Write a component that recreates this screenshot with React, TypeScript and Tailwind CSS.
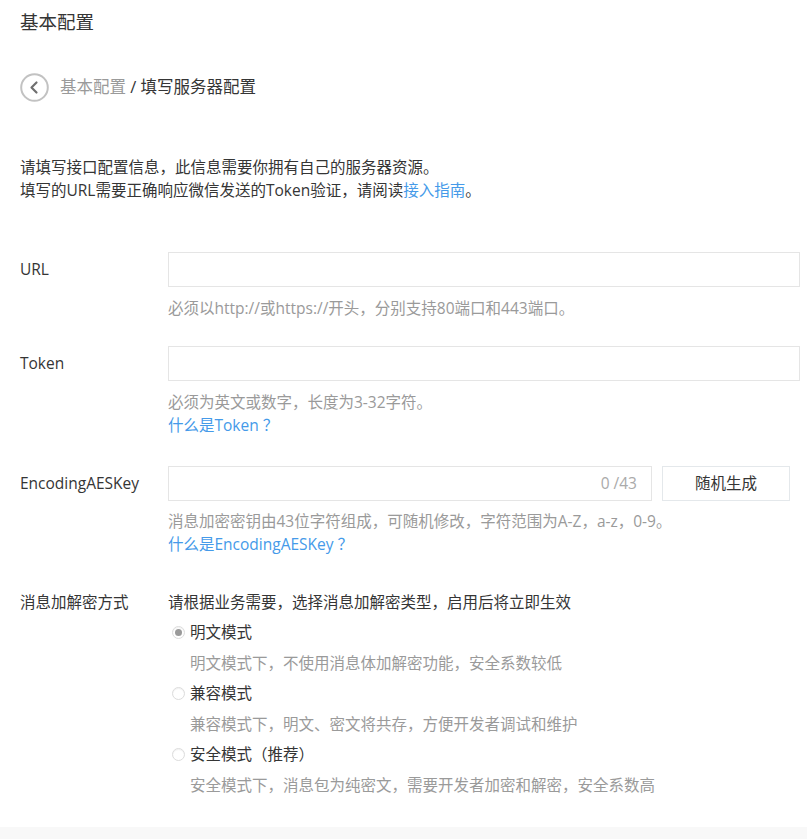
import React from 'react'

const font = { fontFamily: '"Open Sans", "Noto Sans CJK SC", sans-serif' }

function BackIcon() {
  return (
    <svg width="29" height="29" viewBox="0 0 29 29" fill="none">
      <circle cx="14.5" cy="14.5" r="13.3" stroke="#c2c2c2" strokeWidth="2" />
      <polyline points="16.5,9.5 11.5,14.5 16.5,19.5" stroke="#6f6f6f" strokeWidth="2.2" strokeLinecap="round" strokeLinejoin="round" />
    </svg>
  )
}

function Radio({ checked, label, desc }: { checked?: boolean; label: string; desc: string }) {
  return (
    <div>
      <div className="flex items-center h-[30.5px]">
        <span className="ml-[4px] w-[13px] h-[13px] rounded-full border border-[#dcdcdc] bg-white flex items-center justify-center shadow-[inset_0_1px_1px_rgba(0,0,0,0.06)]">
          {checked && <span className="w-[7px] h-[7px] rounded-full bg-[#9a9a9a]" />}
        </span>
        <span className="ml-[5px] text-[#353535]">{label}</span>
      </div>
      <div className="pl-[22px] h-[30.5px] leading-[30.5px] text-[#9a9a9a]">{desc}</div>
    </div>
  )
}

export default function App() {
  return (
    <div className="h-[839px] overflow-hidden flex flex-col bg-white text-[15.5px] text-[#353535]" style={font}>
      <div className="pl-[20px] pr-[7px]">
        {/* Title */}
        <h1 className="pt-[10px] text-[18.5px] leading-[24px] font-normal text-[#353535]">基本配置</h1>

        {/* Breadcrumb */}
        <div className="mt-[38px] flex items-center h-[30px]">
          <BackIcon />
          <div className="ml-[11px] text-[16.5px]">
            <span className="text-[#9a9a9a]">基本配置</span>
            <span className="text-[#353535]"> / 填写服务器配置</span>
          </div>
        </div>

        {/* Intro */}
        <div className="mt-[54px] leading-[23px]">
          <p>请填写接口配置信息，此信息需要你拥有自己的服务器资源。</p>
          <p>
            填写的URL需要正确响应微信发送的Token验证，请阅读<a className="text-[#459ae9]">接入指南</a>。
          </p>
        </div>

        {/* URL */}
        <div className="mt-[50px] flex">
          <label className="w-[148px] shrink-0 leading-[35px]">URL</label>
          <div className="flex-1">
            <div className="h-[35px] border border-[#e5e5e5] bg-white" />
            <p className="mt-[10px] leading-[23px] text-[#9a9a9a]">必须以http://或https://开头，分别支持80端口和443端口。</p>
          </div>
        </div>

        {/* Token */}
        <div className="mt-[26px] flex">
          <label className="w-[148px] shrink-0 leading-[35px]">Token</label>
          <div className="flex-1">
            <div className="h-[35px] border border-[#e5e5e5] bg-white" />
            <p className="mt-[10px] leading-[23px] text-[#9a9a9a]">必须为英文或数字，长度为3-32字符。</p>
            <a className="block leading-[23px] text-[#459ae9]">什么是Token ？</a>
          </div>
        </div>

        {/* EncodingAESKey */}
        <div className="mt-[29px] flex">
          <label className="w-[148px] shrink-0 leading-[35px]">EncodingAESKey</label>
          <div className="flex-1">
            <div className="flex">
              <div className="w-[484px] h-[35px] border border-[#e5e5e5] bg-white flex items-center justify-end pr-[14px] text-[#aaaaaa]">
                0 /43
              </div>
              <button className="ml-[10px] w-[128px] h-[35px] border border-[#e4e8eb] bg-white text-[#353535] text-[15.5px]">
                随机生成
              </button>
            </div>
            <p className="mt-[9px] leading-[23px] text-[#9a9a9a]">消息加密密钥由43位字符组成，可随机修改，字符范围为A-Z，a-z，0-9。</p>
            <a className="block leading-[23px] text-[#459ae9]">什么是EncodingAESKey ？</a>
          </div>
        </div>

        {/* Encryption mode */}
        <div className="mt-[31px] flex">
          <label className="w-[148px] shrink-0 leading-[30.5px]">消息加解密方式</label>
          <div className="flex-1">
            <p className="leading-[30.5px] text-[#353535]">请根据业务需要，选择消息加解密类型，启用后将立即生效</p>
            <Radio checked label="明文模式" desc="明文模式下，不使用消息体加解密功能，安全系数较低" />
            <Radio label="兼容模式" desc="兼容模式下，明文、密文将共存，方便开发者调试和维护" />
            <Radio label="安全模式（推荐）" desc="安全模式下，消息包为纯密文，需要开发者加密和解密，安全系数高" />
          </div>
        </div>
      </div>

      <div className="mt-[26px] flex-1 bg-[#f8f8f8]" />
    </div>
  )
}
